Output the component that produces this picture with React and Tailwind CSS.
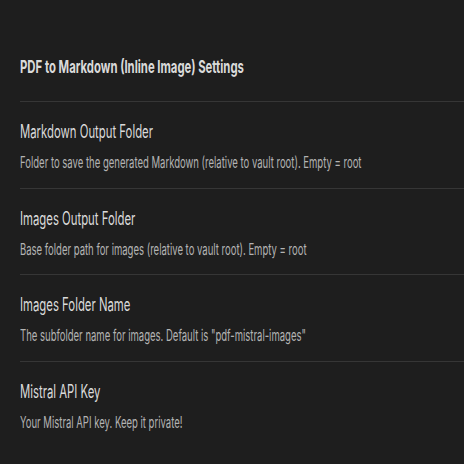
const settings = [
  {
    name: 'Markdown Output Folder',
    desc: 'Folder to save the generated Markdown (relative to vault root). Empty = root',
  },
  {
    name: 'Images Output Folder',
    desc: 'Base folder path for images (relative to vault root). Empty = root',
  },
  {
    name: 'Images Folder Name',
    desc: 'The subfolder name for images. Default is "pdf-mistral-images"',
  },
  {
    name: 'Mistral API Key',
    desc: 'Your Mistral API key. Keep it private!',
  },
]

export default function App() {
  return (
    <main className="h-[464px] w-[464px] overflow-hidden bg-[#1e1e1e] pl-5 font-['Inter',sans-serif]">
      <h2 className="origin-left scale-x-[0.63] whitespace-nowrap pt-[55px] pb-[22px] text-[18px] leading-6 font-bold text-[#dadada]">
        PDF to Markdown (Inline Image) Settings
      </h2>

      {settings.map((item) => (
        <div key={item.name} className="border-t border-[#363636] pt-[18px] pb-[15.7px]">
          <div className="origin-left scale-x-[0.63] whitespace-nowrap text-[18px] leading-6 text-[#dadada]">
            {item.name}
          </div>
          <div className="mt-2 origin-left scale-x-[0.595] whitespace-nowrap text-[16px] leading-5 text-[#b3b3b3]">
            {item.desc}
          </div>
        </div>
      ))}
    </main>
  )
}
